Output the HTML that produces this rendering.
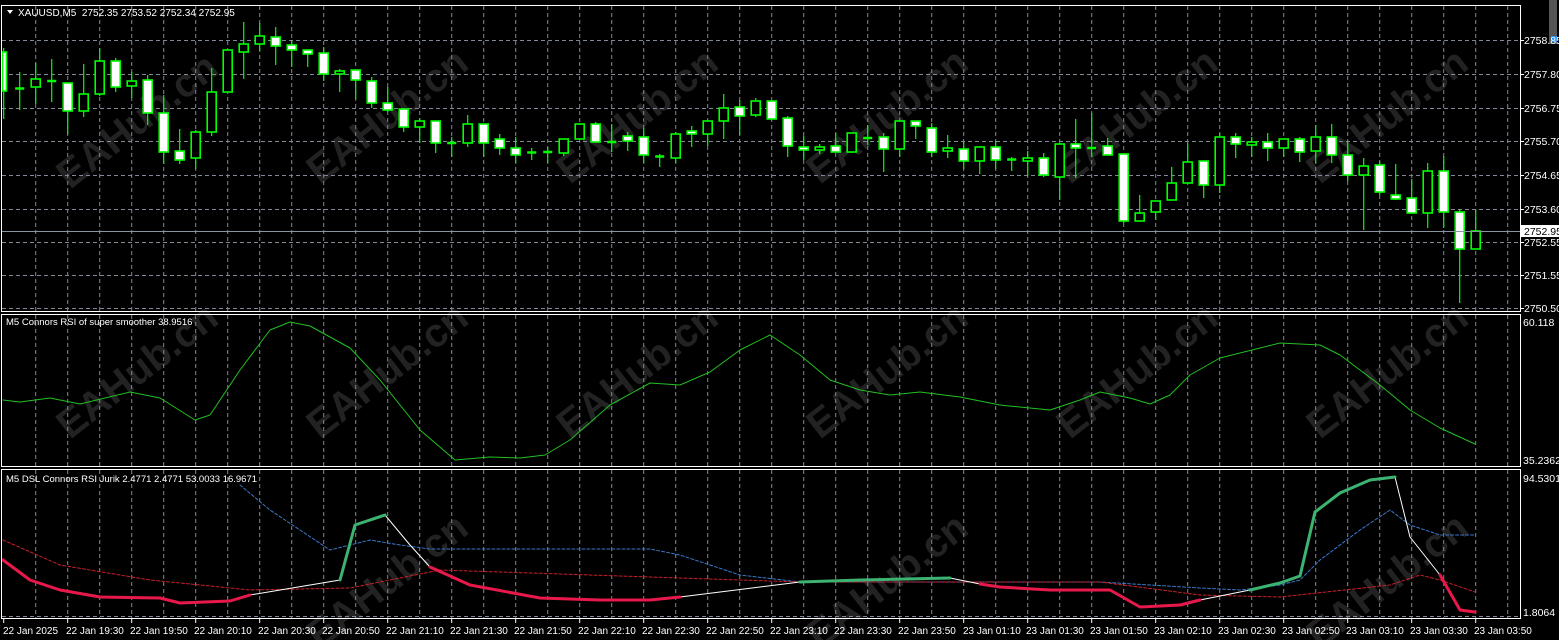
<!DOCTYPE html>
<html><head><meta charset="utf-8"><style>
html,body{margin:0;padding:0;background:#000;width:1559px;height:640px;overflow:hidden}
svg{display:block}
text{font-family:"Liberation Sans",sans-serif;font-size:10px;fill:#fff}
.wm{font-family:"Liberation Sans",sans-serif;font-size:40px;font-weight:bold;fill:#222}
.ax{font-size:10.5px}
</style></head><body>
<svg id="s" width="1559" height="640" viewBox="0 0 1559 640" xmlns="http://www.w3.org/2000/svg">
<rect width="1559" height="640" fill="#000"/>
<g id="wm">
<text class="wm" transform="translate(70,190) rotate(-38)">EAHub.cn</text>
<text class="wm" transform="translate(320,185) rotate(-38)">EAHub.cn</text>
<text class="wm" transform="translate(570,185) rotate(-38)">EAHub.cn</text>
<text class="wm" transform="translate(820,185) rotate(-38)">EAHub.cn</text>
<text class="wm" transform="translate(1070,185) rotate(-38)">EAHub.cn</text>
<text class="wm" transform="translate(1320,185) rotate(-38)">EAHub.cn</text>
<text class="wm" transform="translate(70,440) rotate(-38)">EAHub.cn</text>
<text class="wm" transform="translate(320,440) rotate(-38)">EAHub.cn</text>
<text class="wm" transform="translate(570,440) rotate(-38)">EAHub.cn</text>
<text class="wm" transform="translate(820,440) rotate(-38)">EAHub.cn</text>
<text class="wm" transform="translate(1070,440) rotate(-38)">EAHub.cn</text>
<text class="wm" transform="translate(1320,440) rotate(-38)">EAHub.cn</text>
<text class="wm" transform="translate(320,650) rotate(-38)">EAHub.cn</text>
<text class="wm" transform="translate(820,650) rotate(-38)">EAHub.cn</text>
<text class="wm" transform="translate(1320,650) rotate(-38)">EAHub.cn</text>
</g>
<g id="grid" stroke="#7f8894" stroke-width="1" stroke-dasharray="4,3"></g>
<g id="candles"></g>
<line x1="2" y1="231.5" x2="1520" y2="231.5" stroke="#8a94a0" stroke-width="1"/>
<g id="ind" fill="none"></g>
<g fill="none" stroke="#fff" stroke-width="1">
<rect x="1.5" y="5.5" width="1519" height="306"/>
<rect x="1.5" y="314.5" width="1519" height="152"/>
<rect x="1.5" y="469.5" width="1519" height="149"/>
</g>
<rect x="1549" y="0" width="8" height="44" fill="#555"/>
<rect x="1551" y="36" width="6" height="6" fill="#1e90ff"/>
<path d="M7,10 L13,10 L10,14 Z" fill="#fff"/>
<text x="18" y="16">XAUUSD,M5&#160;&#160;2752.35 2753.52 2752.34 2752.95</text>
<text x="6" y="325" style="font-size:9.5px">M5 Connors RSI of super smoother 38.9516</text>
<text x="6" y="482" style="font-size:9.5px">M5 DSL Connors RSI Jurik 2.4771 2.4771 53.0033 16.9671</text>
<g>
<text class="ax" x="1524" y="44">2758.85</text>
<text class="ax" x="1524" y="78">2757.80</text>
<text class="ax" x="1524" y="112">2756.75</text>
<text class="ax" x="1524" y="145">2755.70</text>
<text class="ax" x="1524" y="179">2754.65</text>
<text class="ax" x="1524" y="213">2753.60</text>
<text class="ax" x="1524" y="246">2752.55</text>
<text class="ax" x="1524" y="279">2751.55</text>
<text class="ax" x="1524" y="312">2750.50</text>
<rect x="1521" y="225" width="38" height="12" fill="#fff"/>
<text class="ax" x="1524" y="235" style="fill:#000">2752.95</text>
<text class="ax" x="1523" y="326">60.118</text>
<text class="ax" x="1523" y="464">35.2362</text>
<text class="ax" x="1523" y="482">94.5301</text>
<text class="ax" x="1523" y="616">1.8064</text>
</g>
<g stroke="#fff" stroke-width="1" id="ticks"></g>
<g>
<text x="3" y="634">22 Jan 2025</text>
<text x="66" y="634">22 Jan 19:30</text>
<text x="130" y="634">22 Jan 19:50</text>
<text x="194" y="634">22 Jan 20:10</text>
<text x="258" y="634">22 Jan 20:30</text>
<text x="322" y="634">22 Jan 20:50</text>
<text x="386" y="634">22 Jan 21:10</text>
<text x="450" y="634">22 Jan 21:30</text>
<text x="514" y="634">22 Jan 21:50</text>
<text x="578" y="634">22 Jan 22:10</text>
<text x="642" y="634">22 Jan 22:30</text>
<text x="706" y="634">22 Jan 22:50</text>
<text x="770" y="634">22 Jan 23:10</text>
<text x="834" y="634">22 Jan 23:30</text>
<text x="898" y="634">22 Jan 23:50</text>
<text x="963" y="634">23 Jan 01:10</text>
<text x="1026" y="634">23 Jan 01:30</text>
<text x="1090" y="634">23 Jan 01:50</text>
<text x="1154" y="634">23 Jan 02:10</text>
<text x="1218" y="634">23 Jan 02:30</text>
<text x="1282" y="634">23 Jan 02:50</text>
<text x="1346" y="634">23 Jan 03:10</text>
<text x="1410" y="634">23 Jan 03:30</text>
<text x="1474" y="634">23 Jan 03:50</text>
</g>
</svg>
<script>
var NS="http://www.w3.org/2000/svg";
function el(p,t,a){var e=document.createElementNS(NS,t);for(var k in a)e.setAttribute(k,a[k]);p.appendChild(e);return e;}
var g=document.getElementById('grid');
[40,74,108,141,175,209,242,275,308].forEach(function(y){el(g,'line',{x1:2,x2:1520,y1:y+.5,y2:y+.5});});
el(g,'line',{x1:2,x2:1520,y1:616.5,y2:616.5});
for(var x=35.7;x<1520;x+=32){el(g,'line',{x1:x,x2:x,y1:6,y2:311});el(g,'line',{x1:x,x2:x,y1:315,y2:466});el(g,'line',{x1:x,x2:x,y1:470,y2:618});}
var tk=document.getElementById('ticks');
[40,74,108,141,175,209,242,275,308].forEach(function(y){el(tk,'line',{x1:1521,x2:1524,y1:y+.5,y2:y+.5});});
for(var x=3.7;x<1520;x+=64){el(tk,'line',{x1:x,x2:x,y1:619,y2:623});}
var C=[[52,91,48,119,1],[88,89.5,72,110,0],[79,87,63,104,0],[80.5,82,59,102,0],[83,111,83,134,1],[94,111,64,117,0],[61,94,48,96,0],[61,87,58,92,1],[81,86,72,98,0],[80,113,75,125,1],[113,152,95,164,1],[151,160,129,164,1],[132,158,130,169,0],[92,132,68,136,0],[50,92,50,92,0],[44,52,22,79,0],[36,44,23,51,0],[37,46,27,65,1],[45,50,40,67,1],[50,54,50,67,1],[53,74,47,81,1],[71,74,69,92,0],[70,80,70,99,1],[81,103,77,108,1],[103,110,87,112,1],[109,127,109,132,1],[121,127,118,143,0],[121,143,121,153,1],[142.5,144,137,157,0],[124,143,115,147,0],[124,143,124,157,1],[139,148,134,155,1],[148,155,137,163,1],[152,154,148,160,1],[151.5,153,147,163,0],[139,153,139,156,0],[124,139,124,139,0],[124,142,122,142,1],[141.5,143,124,152,0],[136,141,132,151,1],[137,155,128,163,1],[156,158,154,167,1],[134,158,132,163,0],[131,134,126,147,1],[121,134,121,146,0],[108,121,94,139,0],[107,116,100,135,1],[101,115,98,117,0],[101,119,101,119,1],[118,146,116,157,1],[147,150,136,160,1],[147,150,144,154,0],[146,152,133,152,1],[133,152,133,153,0],[137.5,139,125,145,0],[137,149,133,172,1],[121,149,121,157,0],[121,126,121,139,1],[128,152,123,157,1],[148,151,135,158,0],[149,161,142,169,1],[147,161,146,174,0],[147,160,141,169,1],[159,161,157,171,1],[158,161,151,176,0],[158,175,153,177,1],[144,177,143,200,0],[144,148,119,178,1],[147.5,149,113,157,0],[146,155,138,155,1],[154,221,154,223,1],[213,221,195,221,0],[201,212,201,220,0],[183,200,167,200,0],[162,183,143,183,0],[161,185,161,198,1],[137,185,133,193,0],[137,144,133,158,1],[142,145,137,157,0],[142,148,133,161,1],[139,148,139,157,0],[139,152,137,162,1],[137,151,125,163,0],[137,155,124,163,1],[155,175,142,181,1],[166,175,158,230,0],[165,192,161,195,1],[195,199,164,200,1],[198,213,179,213,1],[171,213,163,228,0],[171,212,156,228,1],[212,249,209,303,1],[231,249,210,249,0]];
var cg=document.getElementById('candles');
C.forEach(function(c,i){var x=3.7+16*i;
el(cg,'line',{x1:x,x2:x,y1:c[2],y2:c[3],stroke:'#00ff00','stroke-width':1.2});
var h=Math.max(c[1]-c[0],1.5);
if(h<=2){el(cg,'line',{x1:x-4.5,x2:x+4.5,y1:c[0]+.5,y2:c[0]+.5,stroke:'#00ff00','stroke-width':2.5});}
else el(cg,'rect',{x:(i==0?2.5:x-4.5),y:c[0],width:(i==0?4:9),height:h,fill:c[4]?'#fff':'#000',stroke:'#00ff00','stroke-width':1.6});
});
var ig=document.getElementById('ind');
function pl(pts,st,w,dash){var a={points:pts,stroke:st,'stroke-width':w,'stroke-linejoin':'round','stroke-linecap':'round'};if(dash)a['stroke-dasharray']=dash;el(ig,'polyline',a);}
pl("3,400 20,402 50,398 80,404 130,392 160,398 195,420 210,415 240,370 270,330 290,322 310,326 350,348 380,380 420,430 455,460 490,457 520,458 545,455 570,440 610,405 650,383 680,385 710,372 740,350 770,335 800,355 830,380 860,390 890,395 920,392 960,397 1000,405 1050,410 1080,400 1100,392 1130,398 1150,404 1170,395 1190,375 1220,358 1280,343 1320,345 1340,355 1380,385 1410,410 1440,428 1475,444","#22c022",1);
pl("240,485 270,510 300,530 330,550 370,540 400,545 430,549 650,549 680,555 740,575 800,582 1100,582 1200,588 1240,590 1280,585 1300,580 1320,560 1360,530 1390,510 1410,525 1440,535 1475,535","#3a78c8",1,"3,2");
pl("3,540 60,565 150,580 250,590 350,588 400,578 440,570 800,582 1100,582 1200,595 1280,597 1390,585 1420,575 1440,580 1475,592","#c8202a",1,"3,2");
pl("250,595 340,580","#fff",1);
pl("385,515 410,545 430,567","#fff",1);
pl("680,597 800,582","#fff",1);
pl("950,578 980,584","#fff",1);
pl("1200,600 1250,590","#fff",1);
pl("1395,477 1410,537 1440,575","#fff",1);
pl("3,560 30,580 60,590 100,597 160,598 180,603 230,601 250,595","#e8194a",3);
pl("340,580 355,525 385,515","#3cb371",3);
pl("430,567 470,585 540,598 600,600 650,600 680,597","#e8194a",3);
pl("800,582 860,580 950,578","#3cb371",3);
pl("980,584 1000,587 1050,590 1110,590 1140,607 1180,605 1200,600","#e8194a",3);
pl("1250,590 1280,583 1300,576 1315,512 1340,493 1370,480 1395,477","#3cb371",3);
pl("1440,575 1460,610 1475,612","#e8194a",3);
</script>
</body></html>
